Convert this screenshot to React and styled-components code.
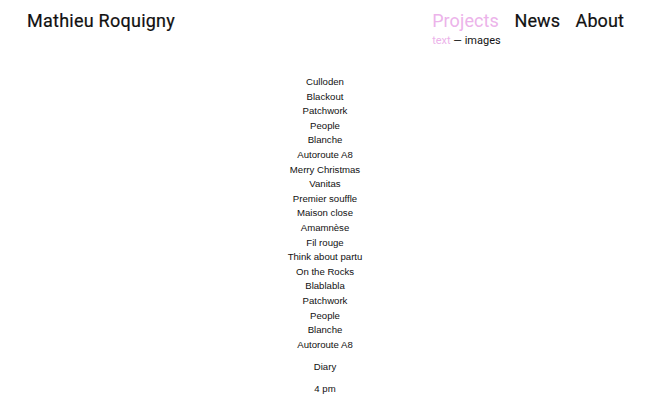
import styled, { createGlobalStyle } from "styled-components";

const GlobalStyle = createGlobalStyle`
  html, body {
    margin: 0;
    padding: 0;
    background: #fff;
  }
  body {
    font-family: Roboto, "Liberation Sans", sans-serif;
    color: #111;
  }
  ul {
    margin: 0;
    padding: 0;
    list-style: none;
  }
`;

const Page = styled.div`
  width: 650px;
  min-height: 416px;
`;

const Header = styled.header`
  display: flex;
  justify-content: space-between;
  align-items: flex-start;
  padding: 10px 26px 0 27px;
`;

const Title = styled.h1`
  margin: 0;
  font-size: 18px;
  font-weight: 400;
  letter-spacing: 0.25px;
  line-height: 22px;
  -webkit-text-stroke: 0.2px #111;
`;

const NavWrap = styled.nav`
  display: flex;
  flex-direction: column;
`;

const Menu = styled.ul`
  display: flex;
  gap: 15.5px;
`;

const MenuLink = styled.a`
  font-size: 18px;
  letter-spacing: 0.1px;
  line-height: 22px;
  color: ${(p) => (p.$active ? "#ecb3ea" : "#111")};
  -webkit-text-stroke: ${(p) => (p.$active ? "0" : "0.2px #111")};
  text-decoration: none;
  cursor: pointer;
`;

const SubMenu = styled.div`
  margin-top: 2px;
  font-size: 11px;
  line-height: 14px;
`;

const SubLink = styled.span`
  color: ${(p) => (p.$active ? "#ecb3ea" : "#111")};
`;

const List = styled.ul`
  margin-top: 27px;
  display: flex;
  flex-direction: column;
  align-items: center;
  font-family: "Liberation Sans", Arial, sans-serif;
  font-size: 9.6px;
  color: #111;
`;

const Item = styled.li`
  line-height: 14.6px;
`;

const Extra = styled.li`
  line-height: 14.6px;
  margin-top: 7.4px;
`;

const projects = [
  "Culloden",
  "Blackout",
  "Patchwork",
  "People",
  "Blanche",
  "Autoroute A8",
  "Merry Christmas",
  "Vanitas",
  "Premier souffle",
  "Maison close",
  "Amamnèse",
  "Fil rouge",
  "Think about partu",
  "On the Rocks",
  "Blablabla",
  "Patchwork",
  "People",
  "Blanche",
  "Autoroute A8",
];

const nav = [
  { name: "Projects", active: true },
  { name: "News" },
  { name: "About" },
];

const App = () => {
  return (
    <>
      <GlobalStyle />
      <Page>
        <Header>
          <Title>Mathieu Roquigny</Title>
          <NavWrap>
            <Menu>
              {nav.map(({ name, active }) => (
                <li key={name}>
                  <MenuLink $active={active}>{name}</MenuLink>
                </li>
              ))}
            </Menu>
            <SubMenu>
              <SubLink $active>text</SubLink> — <SubLink>images</SubLink>
            </SubMenu>
          </NavWrap>
        </Header>

        <List>
          {projects.map((name, i) => (
            <Item key={i}>{name}</Item>
          ))}
          <Extra>Diary</Extra>
          <Extra>4 pm</Extra>
        </List>
      </Page>
    </>
  );
};

export default App;
